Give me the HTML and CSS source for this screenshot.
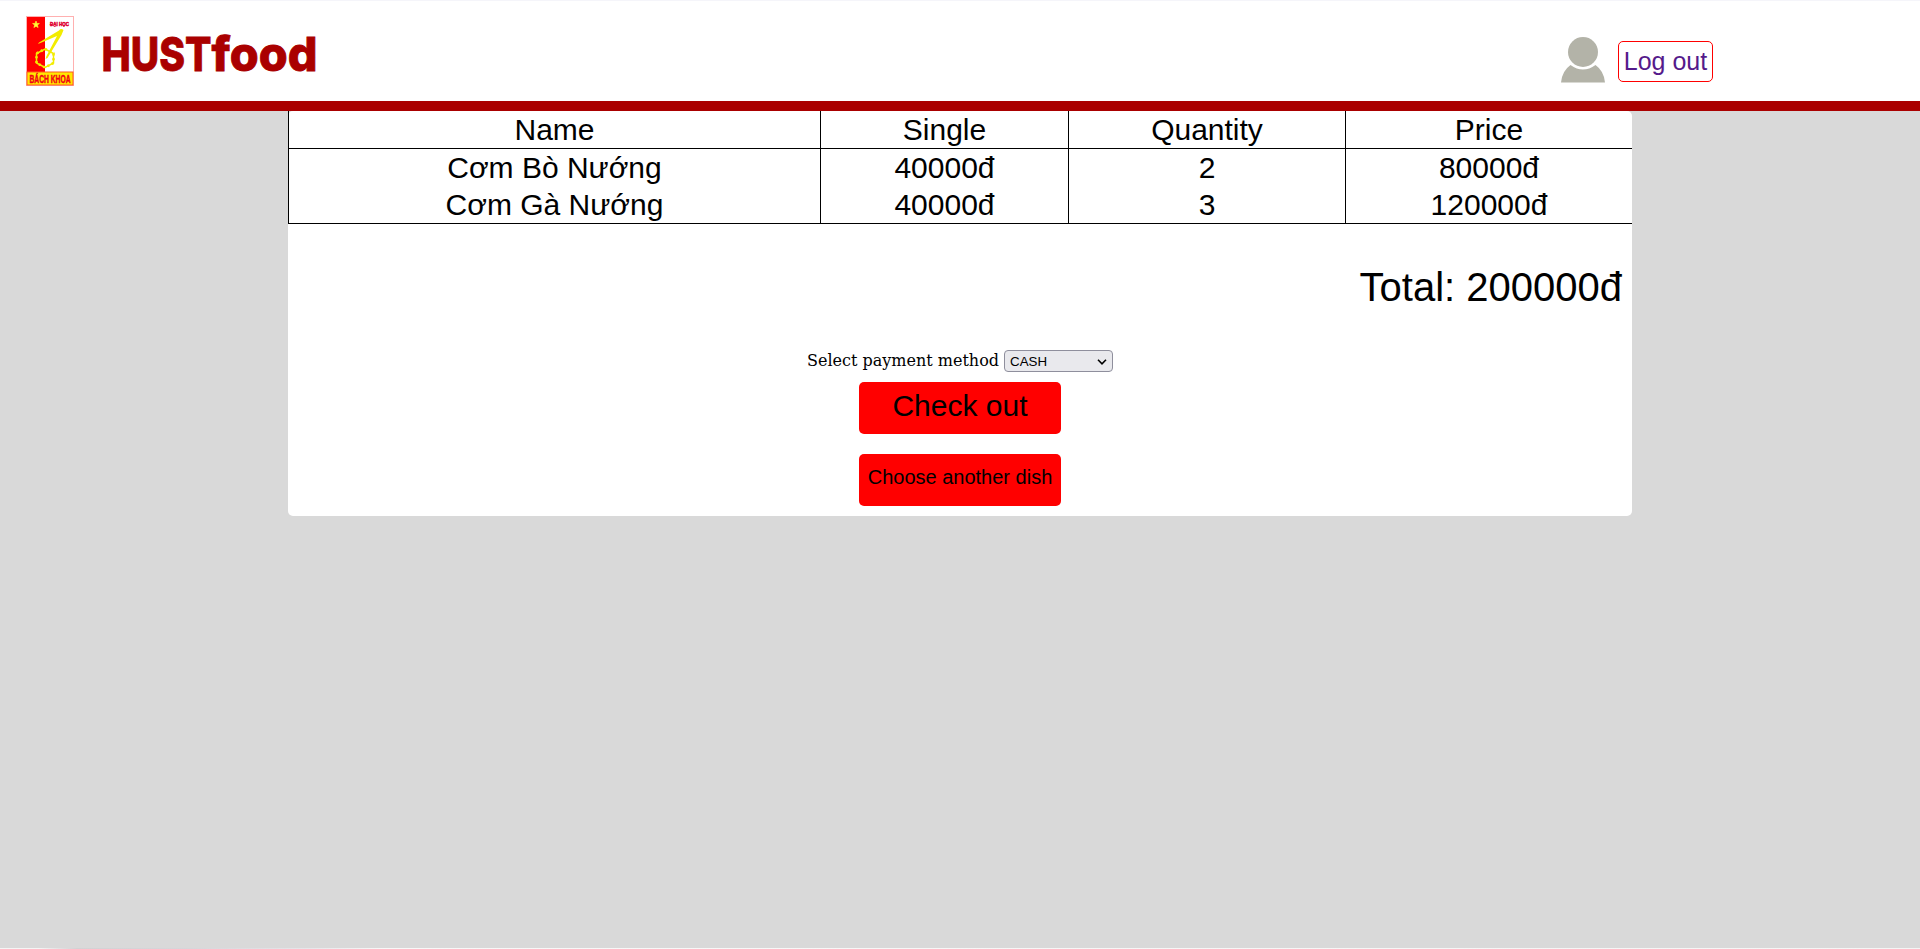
FILE: index.html
```html
<!DOCTYPE html>
<html lang="vi">
<head>
<meta charset="utf-8">
<title>HUSTfood</title>
<link rel="stylesheet" href="styles.css">
</head>
<body>
<header class="header">
  <a class="brand" href="#">
    <svg class="emblem" width="48" height="70" viewBox="0 0 48 70">
      <rect x=".5" y=".5" width="47" height="69" fill="#fff" stroke="#ffb0b0"/>
      <rect x="1" y="1" width="18" height="55" fill="#f00"/>
      <path d="M10 5l.9 2.400 2.500.1-2 1.600.7 2.500-2.100-1.400-2.100 1.400.7-2.500-2-1.600 2.500-.1z" fill="#ff3" stroke="#ff3" stroke-width=".6"/>
      <path d="M33 14.500q2-2.500 4.500-.5l-2 5-14 23-2 1 1-3 10.500-20-19 8 1-1.500z" fill="#f2ec00"/>
      <path d="M19 33l8.500 4.500v9.500L19 51.500 10.500 47v-9.500z" fill="none" stroke="#f2ec00" stroke-width="1.500"/>
      <path d="M19 33l8.500 4.500v9.500L19 51.500 10.500 47v-9.500z" fill="none" stroke="#f2ec00" stroke-width="2.600" stroke-dasharray="2 2.800"/>
      <rect x="1" y="56" width="46" height="13" fill="#ffe800" stroke="#ff5a20"/>
      <text class="emblem-small" x="24" y="9.500" textLength="19" lengthAdjust="spacingAndGlyphs">ĐẠI HỌC</text>
      <text class="emblem-name" x="3.500" y="66.500" textLength="41" lengthAdjust="spacingAndGlyphs">BÁCH KHOA</text>
    </svg>
    <svg class="wordmark" width="220" height="50" viewBox="0 0 220 50">
      <text x="1.500" y="39" textLength="110" lengthAdjust="spacingAndGlyphs">HUST</text>
      <text x="111.500" y="39" textLength="106" lengthAdjust="spacingAndGlyphs">food</text>
    </svg>
  </a>
  <div class="account">
    <svg class="avatar" width="44" height="46" viewBox="0 0 44 46">
      <path d="M0 45.500Q1 34 9.500 28Q22 37 34.500 28Q43 34 44 45.500z" fill="#b3b3a8"/>
      <circle cx="22" cy="15" r="15" fill="#b3b3a8"/>
    </svg>
    <a class="logout" href="#">Log out</a>
  </div>
</header>
<main class="cart">
  <table class="items">
    <colgroup><col class="col-name"><col class="col-single"><col class="col-quantity"><col></colgroup>
    <thead><tr><th>Name</th><th>Single</th><th>Quantity</th><th>Price</th></tr></thead>
    <tbody>
      <tr><td>Cơm Bò Nướng</td><td>40000đ</td><td>2</td><td>80000đ</td></tr>
      <tr><td>Cơm Gà Nướng</td><td>40000đ</td><td>3</td><td>120000đ</td></tr>
    </tbody>
  </table>
  <p class="total">Total: 200000đ</p>
  <form class="payment">
    <label class="method-label" for="method">Select payment method</label>
    <span class="select-wrap">
      <select id="method" class="method"><option>CASH</option></select>
      <svg class="chevron" width="10" height="6" viewBox="0 0 10 6"><path d="M1 .8l4 4 4-4" fill="none" stroke="#000" stroke-width="1.600"/></svg>
    </span>
  </form>
  <a class="button checkout" href="#">Check out</a>
  <a class="button another" href="#">Choose another dish</a>
</main>
<footer class="page-edge"></footer>
</body>
</html>
```
FILE: styles.css
```css
* { box-sizing: border-box; }
body {
  margin: 0;
  height: 949px;
  overflow: hidden;
  display: flex;
  flex-direction: column;
  background: #d9d9d9;
  font-family: "Liberation Sans", Arial, sans-serif;
  color: #000;
}
a { text-decoration: none; }
.header {
  flex: none;
  height: 111px;
  display: flex;
  justify-content: space-between;
  background: #fff;
  border-top: 1px solid #f5f5fa;
  border-bottom: 10px solid #a00;
}
.brand { display: flex; padding: 15px 0 0 26px; }
.emblem { overflow: visible; }
.emblem-small { font: bold 5.500px "Liberation Sans", Arial, sans-serif; fill: #e00030; stroke: #e00030; stroke-width: .5px; }
.emblem-name { font: bold 10px "Liberation Sans", Arial, sans-serif; fill: #f00014; stroke: #f00014; stroke-width: .4px; }
.wordmark { margin: 16px 0 0 26px; overflow: visible; }
.wordmark text { font: 800 47px Inter, sans-serif; fill: #a00; stroke: #a00; stroke-width: .8px; }
.account { display: flex; padding-right: 207px; }
.avatar { margin: 36px 13px 0 0; }
.logout {
  width: 95px;
  height: 41px;
  margin-top: 40px;
  border: 1px solid #f00;
  border-radius: 5px;
  font-size: 25px;
  line-height: 39px;
  text-align: center;
  color: #551a8b;
}
.cart {
  flex: none;
  width: 1344px;
  height: 405px;
  margin: 0 auto;
  display: flex;
  flex-direction: column;
  align-items: center;
  background: #fff;
  border-radius: 5px;
}
.items {
  width: 1344px;
  table-layout: fixed;
  border-collapse: separate;
  border-spacing: 0;
  font-size: 30px;
  line-height: 37px;
  text-align: center;
}
.col-name { width: 532px; }
.col-single { width: 248px; }
.col-quantity { width: 277px; }
.items th, .items td { padding: 0; border-left: 1px solid #000; font-weight: 400; }
.items th, .items tr:last-child td { border-bottom: 1px solid #000; }
.total { align-self: flex-end; margin: 40px 10px 0 0; font-size: 40px; line-height: 46px; }
.payment {
  display: flex;
  align-items: center;
  gap: 5px;
  height: 22px;
  margin: 40px 0 10px;
  font: 16px "DejaVu Serif", serif;
}
.method-label { padding-bottom: 2px; }
.select-wrap { position: relative; display: flex; }
.method {
  appearance: none;
  width: 109px;
  height: 22px;
  padding: 0 5px;
  border: 1px solid #8f8f9d;
  border-radius: 4px;
  background: #e9e9ed;
  font: 13.333px "Liberation Sans", Arial, sans-serif;
  color: #000;
}
.chevron { position: absolute; right: 6px; top: 9px; }
.button {
  width: 202px;
  height: 52px;
  border-radius: 5px;
  background: #f00;
  color: #000;
  text-align: center;
}
.checkout { font-size: 30px; line-height: 47px; margin-bottom: 20px; }
.another { font-size: 20px; line-height: 46px; }
.page-edge { height: 1px; margin-top: auto; background: linear-gradient(90deg, #f5f5f5 2%, #d2d2d4 4%, #d6d6da 10%, #e6e6ea 16%, #f8f8f8 20%, #f5f5f5); }
```
